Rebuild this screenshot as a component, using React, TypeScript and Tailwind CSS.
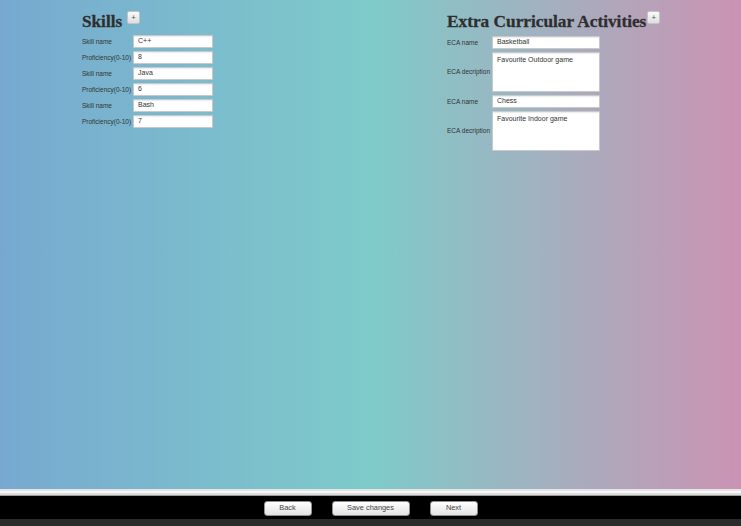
import React from 'react';

const skills = [
  { name: 'C++', level: '8' },
  { name: 'Java', level: '6' },
  { name: 'Bash', level: '7' },
];

const ecas = [
  { name: 'Basketball', desc: 'Favourite Outdoor game' },
  { name: 'Chess', desc: 'Favourite Indoor game' },
];

const PlusButton: React.FC<{ className?: string }> = ({ className = '' }) => (
  <button
    className={`w-[13px] h-[13px] rounded-[2px] border border-[#c4c4c4] bg-gradient-to-b from-[#fafafa] to-[#dedede] flex items-center justify-center text-[7px] leading-none text-[#444] ${className}`}
  >
    +
  </button>
);

const Field: React.FC<{ value: string; className?: string }> = ({ value, className = '' }) => (
  <div
    className={`h-[13px] bg-white border border-[#c9c9c9] rounded-[1px] pl-[4px] flex items-center text-[7px] text-[#333] shadow-[inset_0_1px_1px_rgba(0,0,0,0.08)] ${className}`}
  >
    {value}
  </div>
);

const Area: React.FC<{ value: string }> = ({ value }) => (
  <div className="h-[40px] w-[108px] bg-white border border-[#c9c9c9] rounded-[1px] pl-[4px] pt-[2px] text-[7px] leading-[9px] text-[#333] shadow-[inset_0_1px_1px_rgba(0,0,0,0.08)]">
    {value}
  </div>
);

const FooterButton: React.FC<{ label: string; width: string }> = ({ label, width }) => (
  <button
    className={`${width} h-[15px] rounded-[3px] border border-[#8f8f8f] bg-gradient-to-b from-[#ffffff] to-[#e3e3e3] text-[7.4px] leading-none text-[#444]`}
  >
    {label}
  </button>
);

export default function App() {
  return (
    <div
      className="w-[741px] h-[526px] flex flex-col overflow-hidden"
      style={{ fontFamily: '"Liberation Sans", Arial, sans-serif' }}
    >
      <div className="h-[489px] flex pl-[82px] bg-[linear-gradient(to_right,#77a9d0_0%,#7ecbca_50%,#cb93b3_100%)]">
        {/* Skills */}
        <div className="w-[365px] flex flex-col">
          <div className="flex items-start pt-[11px] h-[35px]">
            <h1 className="mt-[2px] text-[17.2px] leading-[17px] font-bold text-[#2e2e2e] font-['Liberation_Serif',serif] [-webkit-text-stroke:0.3px_#2e2e2e]">
              Skills
            </h1>
            <PlusButton className="ml-[5px]" />
          </div>
          <div className="flex flex-col gap-[3px]">
            {skills.map((s) => (
              <React.Fragment key={s.name}>
                <div className="flex items-center">
                  <span className="w-[51px] text-[6.5px] text-[#333]">Skill name</span>
                  <Field value={s.name} className="w-[80px]" />
                </div>
                <div className="flex items-center">
                  <span className="w-[51px] text-[6.5px] text-[#333] whitespace-nowrap">Proficiency(0-10)</span>
                  <Field value={s.level} className="w-[80px]" />
                </div>
              </React.Fragment>
            ))}
          </div>
        </div>

        {/* Extra Curricular Activities */}
        <div className="flex flex-col">
          <div className="flex items-start pt-[11px] h-[36px]">
            <h1 className="mt-[2px] text-[17.3px] leading-[17px] font-bold text-[#2e2e2e] whitespace-nowrap font-['Liberation_Serif',serif] [-webkit-text-stroke:0.3px_#2e2e2e]">
              Extra Curricular Activities
            </h1>
            <PlusButton className="ml-[1px]" />
          </div>
          <div className="flex flex-col gap-[3px]">
            {ecas.map((e) => (
              <React.Fragment key={e.name}>
                <div className="flex items-center">
                  <span className="w-[45px] text-[6.5px] text-[#333]">ECA name</span>
                  <Field value={e.name} className="w-[108px]" />
                </div>
                <div className="flex items-center">
                  <span className="w-[45px] text-[6.5px] text-[#333] whitespace-nowrap">ECA decription</span>
                  <Area value={e.desc} />
                </div>
              </React.Fragment>
            ))}
          </div>
        </div>
      </div>

      <div className="h-[7px] flex flex-col">
        <div className="h-[2px] bg-[#e4e4e4]" />
        <div className="h-[2px] bg-[#f7f7f7]" />
        <div className="h-[2px] bg-[#dcdcdc]" />
        <div className="h-[1px] bg-[#9a9a9a]" />
      </div>

      <div className="h-[23px] bg-black flex items-center justify-center gap-[20px] pt-[1px]">
        <FooterButton label="Back" width="w-[48px]" />
        <FooterButton label="Save changes" width="w-[78px]" />
        <FooterButton label="Next" width="w-[48px]" />
      </div>
      <div className="flex-1 bg-[#2b2b2b]" />
    </div>
  );
}
